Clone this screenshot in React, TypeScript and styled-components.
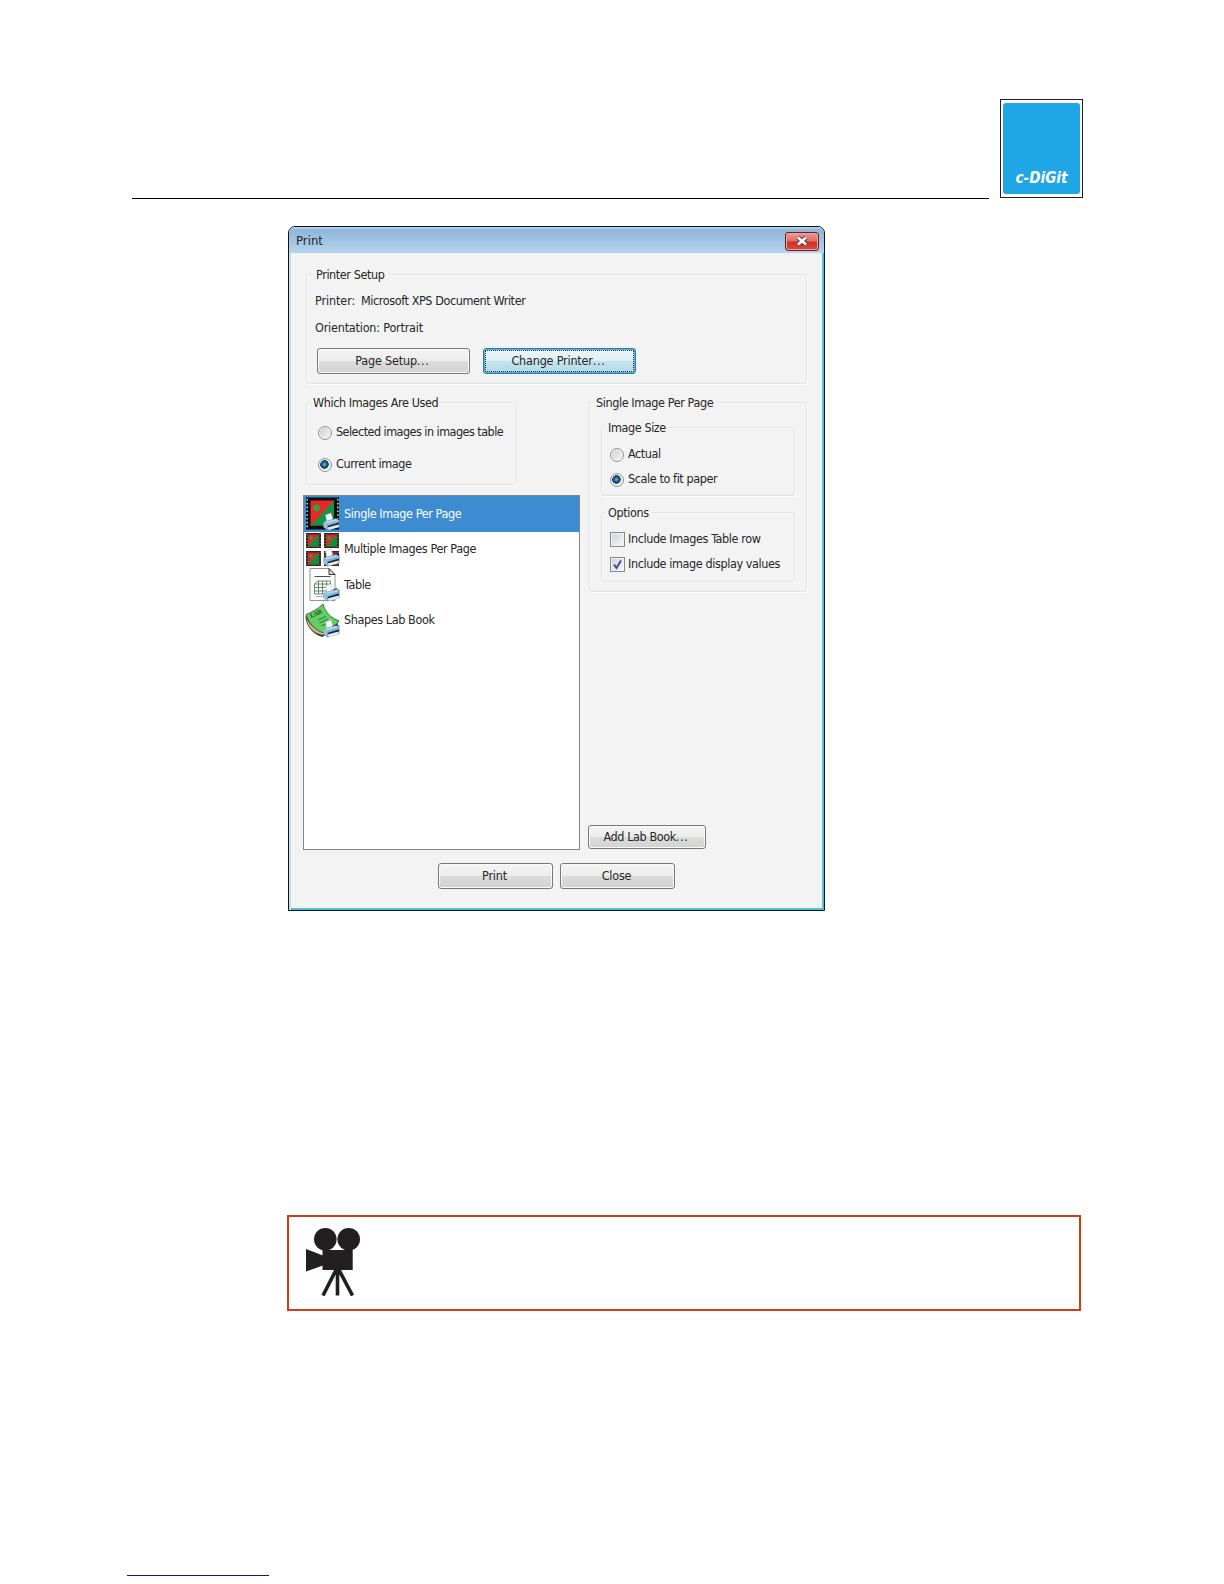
import React, { useState } from 'react';
import styled, { createGlobalStyle, css } from 'styled-components';

const modes = [
  { id: 'single', label: 'Single Image Per Page' },
  { id: 'multiple', label: 'Multiple Images Per Page' },
  { id: 'table', label: 'Table' },
  { id: 'labbook', label: 'Shapes Lab Book' },
];

const PrinterBadge: React.FC = () => (
  <g>
    <path d="M20.500 19l5.500-2 2 7-6 2.500z" fill="#f7f9fb" stroke="#b4bcc2" strokeWidth=".5" />
    <path d="M18.500 26l12-4 4 2.500v6.500l-12 3.500-4-3.500z" fill="#5f8fae" />
    <path d="M19 26l11.500-3.500 3.500 2-11.500 3.500z" fill="#a9d3ec" />
    <path d="M22.500 28l11.500-3.500v2l-11.500 3.500z" fill="#7fb4d8" />
    <path d="M22.500 30l11.500-3.500v2l-11.500 3.500z" fill="#15222b" />
    <path d="M22.500 31.500l11-3 .5 2.500-10 3z" fill="#dfe9ef" />
    <path d="M18.500 26l4 2v6l-4-3z" fill="#9cbfd4" />
    <path d="M28 23l4-1.500 2.500 2.500" fill="none" stroke="#25343d" strokeWidth=".9" />
  </g>
);

const MiniPicture: React.FC<{ x: number; y: number }> = ({ x, y }) => (
  <g transform={`translate(${x} ${y})`}>
    <rect width="15" height="15" fill="#35251f" />
    <rect x="2" y="1.500" width="11" height="12" fill="#d8282c" />
    <path d="M13 1.500v12H2z" fill="#168a3d" />
    <circle cx="5" cy="5" r="1.800" fill="#3f9a3d" />
    <path d="M11 3L4 11" stroke="#8c6a38" strokeWidth="1" />
    <path d="M1 1v13M14 1v13" stroke="#a69b91" strokeWidth=".8" strokeDasharray="1 2" />
  </g>
);

const ModeIcon: React.FC<{ id: string }> = ({ id }) => (
  <svg width="35" height="35" viewBox="0 0 35 35">
    {id === 'single' && (
      <>
        <path d="M1 1.500h33v32H1z" fill="#0d0e0c" />
        <path d="M2.200 3v30M32.800 3v30" stroke="#c9ced0" strokeWidth="1.600" strokeDasharray="1.600 2.200" />
        <path d="M5.500 4.500H29v25H5.500z" fill="#e9262b" />
        <path d="M29 4.500v25H5.500z" fill="#139447" />
        <circle cx="11.500" cy="12" r="3.500" fill="#3a9e3c" />
        <path d="M5.500 29.500L29 4.500" stroke="#9e5a2c" strokeWidth=".8" />
      </>
    )}
    {id === 'multiple' && (
      <>
        <MiniPicture x={1} y={1} />
        <MiniPicture x={19} y={1} />
        <MiniPicture x={1} y={19} />
        <MiniPicture x={19} y={19} />
      </>
    )}
    {id === 'table' && (
      <>
        <path d="M5 1.500h19l6 6v26H5z" fill="#fdfdfd" stroke="#8e9492" strokeWidth="1" />
        <path d="M24 1.500v6h6z" fill="#d9dddd" stroke="#333" strokeWidth="1" />
        <path d="M9.500 9.500h16" stroke="#465350" strokeWidth="1" />
        <path
          d="M12.500 14h13v13h-16V17h16M12.500 14l-3 3M9.500 20.500h16M9.500 24h16M13.500 14v13M17.500 14v13M21.500 14v13"
          fill="none"
          stroke="#528064"
          strokeWidth=".9"
        />
        <path d="M11 29.500h9" stroke="#a8b0ad" strokeWidth="1" />
      </>
    )}
    {id === 'labbook' && (
      <>
        <path d="M.5 13c0 10 8 19 17 21l15-10 1-7z" fill="#4d3a24" />
        <path d="M1.500 15c1 9 7 15 16 17l15-11v-3l-15 11C10 27 4 21 1.500 15z" fill="#c9b98f" />
        <path d="M1 11.500C7 9 13 6 18 1c2 8 8 14 16 17-4 5-9 9-15 12C11 28 4 21 1 11.500z" fill="#62ce64" stroke="#2c5c2b" strokeWidth=".8" />
        <path d="M13 17l8-3.500M14.500 20l8.500-4M16.500 23l6-3" stroke="#246b31" strokeWidth=".9" />
        <text transform="translate(6 15) rotate(-24)" fontFamily="Liberation Serif, serif" fontSize="6.500" fontWeight="700" fill="#244d24">
          LAB
        </text>
      </>
    )}
    <PrinterBadge />
  </svg>
);

const MovieCamera: React.FC = () => (
  <svg width="55" height="68" viewBox="0 0 55 68" fill="#231f20">
    <circle cx="19.300" cy="11.300" r="11.300" />
    <circle cx="42.700" cy="11.300" r="11.300" />
    <path d="M16.500 22h30.200v20H16.500z" />
    <path d="M0 21l17 6.500v10L0 43.500z" />
    <path d="M30.500 41L17 67.500M31.500 41v26.500M32.500 41L46.500 67.500" fill="none" stroke="#231f20" strokeWidth="3.600" />
  </svg>
);

const Tick: React.FC = () => (
  <svg width="11" height="11" viewBox="0 0 11 11">
    <path d="M2 5.500l2.500 3.500L9 1.500" fill="none" stroke="#3c4f9c" strokeWidth="2" />
  </svg>
);

const App: React.FC = () => {
  const [source, setSource] = useState('current');
  const [size, setSize] = useState('scale');
  const [row, setRow] = useState(false);
  const [values, setValues] = useState(true);
  const [mode, setMode] = useState('single');

  return (
    <StyledPage>
      <GlobalStyle />
      <StyledHeader>
        <StyledRule />
        <StyledLogo>
          <StyledLogoFace>
            <StyledLogoText viewBox="0 0 56 18">
              <text x="1.500" y="14" textLength="52" lengthAdjust="spacingAndGlyphs" fontFamily="DejaVu Sans, sans-serif" fontSize="15" fontWeight="700" fontStyle="italic" fill="#fff">
                c-DiGit
              </text>
            </StyledLogoText>
          </StyledLogoFace>
        </StyledLogo>
      </StyledHeader>

      <StyledWindow>
        <StyledTitleBar>
          <span>Print</span>
          <StyledCloseButton aria-label="Close window">
            <svg width="14" height="12" viewBox="0 0 14 12">
              <path d="M3 2.500l8 7M11 2.500l-8 7" stroke="#5c3438" strokeWidth="4.400" />
              <path d="M3 2.500l8 7M11 2.500l-8 7" stroke="#fff" strokeWidth="2.600" />
            </svg>
          </StyledCloseButton>
        </StyledTitleBar>

        <StyledBody>
          <StyledPrinterGroup>
            <StyledLegend $indent="6px">Printer Setup</StyledLegend>
            <StyledInfo $top="10px">
              <StyledInfoKey>Printer:</StyledInfoKey>
              <span>Microsoft XPS Document Writer</span>
            </StyledInfo>
            <StyledOrientation $top="11px">Orientation: Portrait</StyledOrientation>
            <StyledPrinterButtons>
              <StyledButton $w="153px">
                Page Setup<StyledDots>...</StyledDots>
              </StyledButton>
              <StyledButton $w="153px" $focused>
                Change Printer<StyledDots>...</StyledDots>
              </StyledButton>
            </StyledPrinterButtons>
          </StyledPrinterGroup>

          <StyledColumns>
            <StyledLeft>
              <StyledSourceGroup>
                <StyledLegend $indent="3px">Which Images Are Used</StyledLegend>
                <StyledOption $top="13px" onClick={() => setSource('selected')}>
                  <StyledRadio $on={source === 'selected'} />
                  <StyledTightLabel>Selected images in images table</StyledTightLabel>
                </StyledOption>
                <StyledOption $top="16px" onClick={() => setSource('current')}>
                  <StyledRadio $on={source === 'current'} />
                  Current image
                </StyledOption>
              </StyledSourceGroup>
              <StyledList>
                {modes.map((m) => (
                  <StyledListItem key={m.id} $active={m.id === mode} onClick={() => setMode(m.id)}>
                    <ModeIcon id={m.id} />
                    {m.label}
                  </StyledListItem>
                ))}
              </StyledList>
            </StyledLeft>

            <StyledRight>
              <StyledModeGroup>
                <StyledLegend $indent="3px">Single Image Per Page</StyledLegend>
                <StyledInnerGroup $top="16px" $h="69px">
                  <StyledLegend $indent="3px">Image Size</StyledLegend>
                  <StyledOption $top="10px" $left="8px" onClick={() => setSize('actual')}>
                    <StyledRadio $on={size === 'actual'} />
                    Actual
                  </StyledOption>
                  <StyledOption $top="9px" $left="8px" onClick={() => setSize('scale')}>
                    <StyledRadio $on={size === 'scale'} />
                    Scale to fit paper
                  </StyledOption>
                </StyledInnerGroup>
                <StyledInnerGroup $top="16px" $h="70px">
                  <StyledLegend $indent="3px">Options</StyledLegend>
                  <StyledOption $top="10px" $left="8px" onClick={() => setRow(!row)}>
                    <StyledCheck>{row && <Tick />}</StyledCheck>
                    Include Images Table row
                  </StyledOption>
                  <StyledOption $top="9px" $left="8px" onClick={() => setValues(!values)}>
                    <StyledCheck>{values && <Tick />}</StyledCheck>
                    Include image display values
                  </StyledOption>
                </StyledInnerGroup>
              </StyledModeGroup>
              <StyledAddButton $w="118px" $h="24px">
                Add Lab Book<StyledDots>...</StyledDots>
              </StyledAddButton>
            </StyledRight>
          </StyledColumns>

          <StyledFooter>
            <StyledButton $w="115px">Print</StyledButton>
            <StyledButton $w="115px">Close</StyledButton>
          </StyledFooter>
        </StyledBody>
      </StyledWindow>

      <StyledVideoNote>
        <MovieCamera />
      </StyledVideoNote>
      <StyledBottomLine />
    </StyledPage>
  );
};

const GlobalStyle = createGlobalStyle`
  * {
    box-sizing: border-box;
  }
  body {
    margin: 0;
    background: #fff;
  }
`;

const StyledPage = styled.div`
  display: flex;
  flex-direction: column;
  width: 1224px;
  height: 1584px;
  padding: 99px 0 0 0;
  overflow: hidden;
  color: #262626;
  font-family: 'DejaVu Sans Condensed', 'DejaVu Sans', sans-serif;
  font-size: 12.5px;
  line-height: 16px;
  letter-spacing: -0.4px;
`;

const StyledHeader = styled.div`
  display: flex;
  align-items: flex-end;
  gap: 11px;
  height: 99px;
  padding-left: 132px;
`;

const StyledRule = styled.div`
  width: 857px;
  height: 1px;
  background: #000;
  margin-bottom: -1px;
`;

const StyledLogo = styled.div`
  width: 83px;
  height: 99px;
  padding: 3px 2px;
  border: 1px solid #231f20;
`;

const StyledLogoFace = styled.div`
  display: flex;
  align-items: flex-end;
  justify-content: center;
  height: 100%;
  padding-bottom: 7px;
  border-radius: 3px;
  background: #1fa6e6;
`;

const StyledLogoText = styled.svg`
  width: 56px;
  height: 18px;
  letter-spacing: 0;
`;

const StyledWindow = styled.div`
  display: flex;
  flex-direction: column;
  width: 537px;
  height: 685px;
  margin: 28px 0 0 288px;
  border: 1px solid #101418;
  border-radius: 7px 7px 0 0;
  background: #f3f3f3;
  box-shadow: inset 2px 0 0 #c3e0f2, inset -2px -2px 0 #4fc0dc;
`;

const StyledTitleBar = styled.div`
  display: flex;
  align-items: center;
  justify-content: space-between;
  height: 26px;
  padding: 2px 5px 0 7px;
  border-radius: 6px 6px 0 0;
  background: linear-gradient(#c0d8ec 0, #8fb5d9 3px, #a0c3e2 50%, #b4d4ed 100%);
  font-size: 13px;
  letter-spacing: 0;
`;

const StyledCloseButton = styled.button`
  display: flex;
  align-items: center;
  justify-content: center;
  width: 34px;
  height: 19px;
  padding: 0;
  border: 1px solid #612329;
  border-radius: 3px;
  background: linear-gradient(#ec9a93 0, #de6d66 48%, #cb2f27 52%, #dd4d3c 100%);
  box-shadow: inset 0 0 0 1px #f0a59b;
`;

const StyledBody = styled.div`
  display: flex;
  flex-direction: column;
  padding: 21px 17px 0 14px;
`;

const groupFrame = css`
  border: 1px solid #dfe3e5;
  border-radius: 3px;
  box-shadow: inset 1px 1px 0 #fafbfb, 1px 1px 0 #fafbfb;
`;

const StyledPrinterGroup = styled.section`
  ${groupFrame}
  height: 110px;
  margin-left: 3px;
`;

const StyledLegend = styled.div<{ $indent: string }>`
  width: fit-content;
  margin: -8px 0 0 ${(p) => p.$indent};
  padding: 0 3px;
  background: #f3f3f3;
`;

const StyledInfo = styled.div<{ $top: string }>`
  display: flex;
  margin: ${(p) => p.$top} 0 0 8px;
`;

const StyledOrientation = styled(StyledInfo)`
  letter-spacing: -0.2px;
`;

const StyledInfoKey = styled.span`
  width: 46px;
  letter-spacing: -0.1px;
`;

const StyledPrinterButtons = styled.div`
  display: flex;
  gap: 13px;
  margin: 12px 0 0 10px;
`;

const StyledButton = styled.button<{ $w: string; $h?: string; $focused?: boolean }>`
  width: ${(p) => p.$w};
  height: ${(p) => p.$h || '26px'};
  padding: 0 2px 1px 0;
  border: 1px solid #777;
  border-radius: 3px;
  background: linear-gradient(#f4f4f4 0, #ececec 48%, #dcdcdb 52%, #d2d2d1 100%);
  box-shadow: inset 0 0 0 1px #fbfbfb;
  color: inherit;
  font: inherit;
  letter-spacing: -0.2px;

  ${(p) =>
    p.$focused &&
    css`
      border-color: #2b7fa6;
      background: linear-gradient(#eef5f7 0, #dfeff4 48%, #c4e2eb 52%, #b7dbe5 100%);
      box-shadow: inset 0 0 0 1px #4db4d8;
      outline: 1px dotted #17303c;
      outline-offset: -3px;
    `}
`;

const StyledDots = styled.span`
  letter-spacing: 0.7px;
`;

const StyledAddButton = styled(StyledButton)`
  margin-left: -1px;
  letter-spacing: -0.4px;
`;

const StyledColumns = styled.div`
  display: flex;
  justify-content: space-between;
  margin-top: 18px;
  height: 448px;
`;

const StyledLeft = styled.div`
  display: flex;
  flex-direction: column;
  width: 277px;
`;

const StyledSourceGroup = styled.section`
  ${groupFrame}
  width: 211px;
  height: 83px;
  margin-left: 3px;
`;

const StyledOption = styled.div<{ $top: string; $left?: string }>`
  display: flex;
  align-items: center;
  gap: 5px;
  margin: ${(p) => p.$top} 0 0 ${(p) => p.$left || '11px'};
  white-space: nowrap;
`;

const StyledTightLabel = styled.span`
  letter-spacing: -0.53px;
`;

const StyledRadio = styled.span<{ $on: boolean }>`
  flex-shrink: 0;
  width: 14px;
  height: 14px;
  margin: 1px -1px 0 0;
  border: 1px solid #8f9293;
  border-radius: 50%;
  background: ${(p) =>
    p.$on
      ? 'radial-gradient(circle at 45% 45%, #7cc4de 0, #236b94 2px, #12344f 4px, #e6eaec 4.6px)'
      : 'linear-gradient(135deg, #c9cccd, #f8f8f8)'};
  box-shadow: inset 0 0 0 1px #f4f4f4;
`;

const StyledCheck = styled.span`
  display: flex;
  align-items: center;
  justify-content: center;
  flex-shrink: 0;
  width: 15px;
  height: 15px;
  margin-right: -2px;
  border: 1px solid #858889;
  background: linear-gradient(135deg, #cfd3d6, #f6f6f6);
  box-shadow: inset 0 0 0 1px #f3f3f3;
`;

const StyledList = styled.div`
  flex: 1;
  margin-top: 10px;
  border: 1px solid #82868a;
  background: #fff;
`;

const StyledListItem = styled.div<{ $active: boolean }>`
  display: flex;
  align-items: center;
  gap: 4px;
  height: 35.5px;
  padding-left: 1px;
  background: ${(p) => (p.$active ? '#3d8cd2' : 'transparent')};
  color: ${(p) => (p.$active ? '#fff' : 'inherit')};
`;

const StyledRight = styled.div`
  display: flex;
  flex-direction: column;
  justify-content: space-between;
  width: 218px;
  padding-bottom: 1px;
`;

const StyledModeGroup = styled.section`
  ${groupFrame}
  height: 190px;
`;

const StyledInnerGroup = styled.section<{ $top: string; $h: string }>`
  ${groupFrame}
  width: 194px;
  height: ${(p) => p.$h};
  margin: ${(p) => p.$top} 0 0 11px;
`;

const StyledFooter = styled.div`
  display: flex;
  gap: 7px;
  margin: 13px 0 0 135px;
`;

const StyledVideoNote = styled.div`
  width: 794px;
  height: 96px;
  margin: 304px 0 0 287px;
  padding: 11px 17px;
  border: 2px solid #cb4017;
`;

const StyledBottomLine = styled.div`
  width: 142px;
  height: 1px;
  margin: 264px 0 0 127px;
  background: #15157c;
`;

export default App;
